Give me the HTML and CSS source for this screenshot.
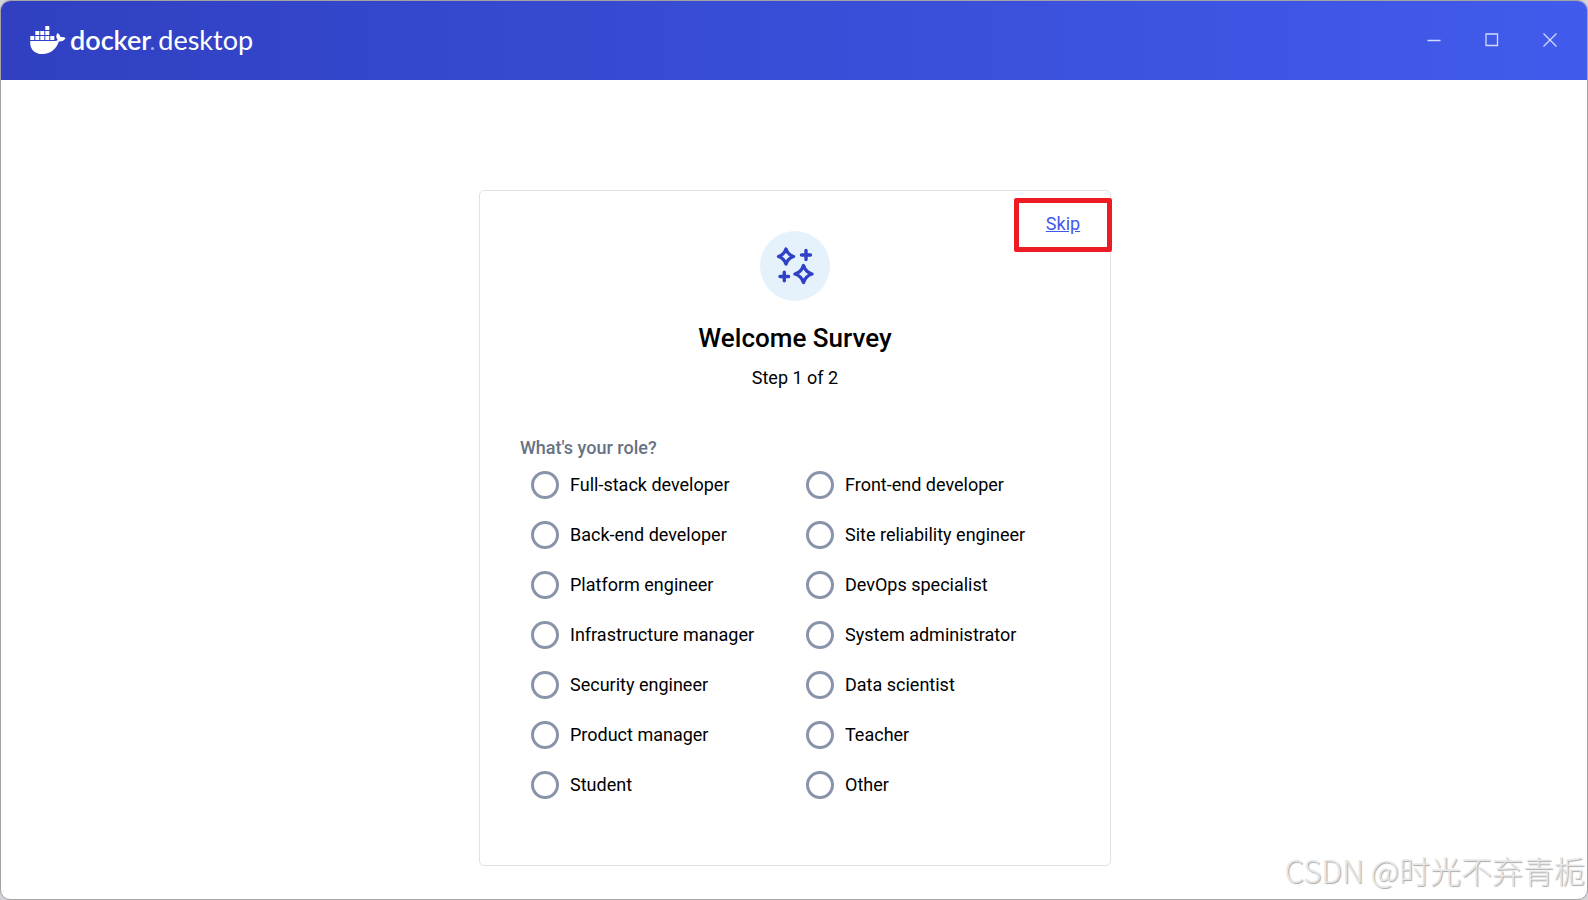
FILE: index.html
```html
<!DOCTYPE html>
<html lang="en">
<head>
    <meta charset="UTF-8">
    <meta name="viewport" content="width=device-width, initial-scale=1.0">
    <title>Docker Desktop</title>
    <link rel="stylesheet" href="styles.css">
</head>
<body>
    <div class="window">
        <header class="titlebar">
            <div class="brand">
                <svg class="whale" viewBox="0 0 36 28" width="36" height="28" aria-hidden="true">
                    <g fill="#fff">
                        <rect x="15.3" y="0" width="4" height="4"/>
                        <rect x="5.3" y="5" width="4" height="4"/>
                        <rect x="10.3" y="5" width="4" height="4"/>
                        <rect x="15.3" y="5" width="4" height="4"/>
                        <rect x="0.3" y="10" width="4" height="4"/>
                        <rect x="5.3" y="10" width="4" height="4"/>
                        <rect x="10.3" y="10" width="4" height="4"/>
                        <rect x="15.3" y="10" width="4" height="4"/>
                        <rect x="20.3" y="10" width="4" height="4"/>
                        <path d="M0.2 15H24.2C25.8 15 27.1 14.6 27.8 14C25.7 11.5 26 8.9 27.6 7C29.4 8.2 30.3 9.7 30.4 11.1C32.3 10.7 34.2 11 35.6 12C34.5 14.4 32 15.7 28.8 15.6C26.2 23.2 20.8 28 12.6 28C4.4 28 -0.3 23.2 0.2 15Z"/>
                    </g>
                </svg>
                <span class="wordmark"><b>docker</b><i class="dot"></i><span>desktop</span></span>
            </div>
            <div class="controls">
                <button type="button" aria-label="Minimize">
                    <svg width="14" height="14" viewBox="0 0 14 14"><path d="M0.5 7.5H13.5"/></svg>
                </button>
                <button type="button" aria-label="Maximize">
                    <svg width="14" height="14" viewBox="0 0 14 14"><path d="M1 1H12.5V12.5H1Z"/></svg>
                </button>
                <button type="button" aria-label="Close">
                    <svg width="14" height="14" viewBox="0 0 14 14"><path d="M0.5 0.5L13.5 13.5M13.5 0.5L0.5 13.5"/></svg>
                </button>
            </div>
        </header>

        <main>
            <form class="card">
                <a class="skip" href="#">Skip</a>
                <div class="badge">
                    <svg width="38" height="38" viewBox="0 0 38 38" fill="none" stroke="#2f41c4" stroke-width="3.4" stroke-linejoin="round" stroke-linecap="round" aria-hidden="true">
                        <path d="M10 2Q11.8 7.6 17.5 9.5Q11.8 11.4 10 17Q8.2 11.4 2.5 9.5Q8.2 7.6 10 2Z"/>
                        <path d="M27.5 18.5Q29.5 25 36 27Q29.5 29 27.5 35.5Q25.5 29 19 27Q25.5 25 27.5 18.5Z"/>
                        <path d="M30 3.5V12.5M25.5 8H34.5M8.3 25.3V33.7M4 29.5H12.6"/>
                    </svg>
                </div>
                <h1>Welcome Survey</h1>
                <p class="step">Step 1 of 2</p>

                <fieldset>
                    <legend>What's your role?</legend>
                    <div class="roles">
                        <label><input type="radio" name="role" value="full-stack">Full-stack developer</label>
                        <label><input type="radio" name="role" value="front-end">Front-end developer</label>
                        <label><input type="radio" name="role" value="back-end">Back-end developer</label>
                        <label><input type="radio" name="role" value="sre">Site reliability engineer</label>
                        <label><input type="radio" name="role" value="platform">Platform engineer</label>
                        <label><input type="radio" name="role" value="devops">DevOps specialist</label>
                        <label><input type="radio" name="role" value="infrastructure">Infrastructure manager</label>
                        <label><input type="radio" name="role" value="sysadmin">System administrator</label>
                        <label><input type="radio" name="role" value="security">Security engineer</label>
                        <label><input type="radio" name="role" value="data">Data scientist</label>
                        <label><input type="radio" name="role" value="product">Product manager</label>
                        <label><input type="radio" name="role" value="teacher">Teacher</label>
                        <label><input type="radio" name="role" value="student">Student</label>
                        <label><input type="radio" name="role" value="other">Other</label>
                    </div>
                </fieldset>
            </form>
        </main>
        <div class="watermark" lang="zh-CN">CSDN @时光不弃青栀</div>
    </div>
</body>
</html>
```

FILE: styles.css
```css
* {
    box-sizing: border-box;
}
body {
    margin: 0;
    background-color: #d4d4d8;
    font-family: Roboto, "Noto Sans CJK SC", sans-serif;
    font-size: 18px;
    line-height: 24px;
    color: #000;
}
.window {
    position: relative;
    display: flex;
    flex-direction: column;
    min-height: 100vh;
    border: 1px solid #a3a3a3;
    border-radius: 10px;
    overflow: hidden;
    background-color: #fff;
}

/* title bar */
.titlebar {
    display: flex;
    align-items: center;
    justify-content: space-between;
    height: 79px;
    padding: 0 8px 2px 29px;
    background: linear-gradient(90deg, #3040c1, #415bec);
}
.brand {
    display: flex;
    align-items: center;
    gap: 4px;
    color: #fff;
}
.whale {
    display: block;
}
.wordmark {
    display: flex;
    align-items: center;
    font-family: Lato, sans-serif;
    font-size: 27px;
    line-height: 32px;
}
.wordmark b {
    font-weight: 600;
}
.dot {
    align-self: flex-end;
    width: 3px;
    height: 3px;
    margin: 0 4px 6px 0;
    border-radius: 50%;
    background-color: #a5aeeb;
}
.controls {
    display: flex;
}
.controls button {
    display: flex;
    align-items: center;
    justify-content: center;
    width: 58px;
    height: 58px;
    padding: 0;
    border: 0;
    background: none;
}
.controls svg {
    fill: none;
    stroke: #d3daff;
    stroke-width: 1.3;
}

/* survey card */
main {
    flex: 1;
    padding: 110px 16px 32px 18px;
}
.card {
    position: relative;
    max-width: 632px;
    min-height: 676px;
    margin: 0 auto;
    padding: 40px;
    border: 1px solid #e1e2e6;
    border-radius: 5px;
    text-align: center;
}
.skip {
    position: absolute;
    top: 7px;
    right: -2px;
    width: 98px;
    height: 54px;
    border: 5px solid #ed1c24;
    border-radius: 2px;
    line-height: 42px;
    color: #4159e8;
}
.badge {
    display: flex;
    align-items: center;
    justify-content: center;
    width: 70px;
    height: 70px;
    margin: 0 auto;
    border-radius: 50%;
    background-color: #e5f2fc;
}
h1 {
    margin: 20px 0 11px;
    font-size: 26px;
    font-weight: 500;
    line-height: 34px;
}
.step {
    margin: 0;
}
fieldset {
    margin: 46px 0 0;
    padding: 0;
    border: 0;
    text-align: left;
}
legend {
    padding: 0;
    font-weight: 500;
    color: #677285;
}
.roles {
    display: grid;
    grid-template-columns: 1fr 1fr;
}
.roles label {
    display: flex;
    align-items: center;
    gap: 11px;
    height: 50px;
    padding-left: 11px;
}
.roles input {
    appearance: none;
    width: 28px;
    height: 28px;
    margin: 0;
    border: 3px solid #8993a9;
    border-radius: 50%;
    background-color: #fff;
}
.roles input:checked {
    border-width: 8px;
    border-color: #4159e8;
}

.watermark {
    position: absolute;
    right: 2px;
    bottom: 11px;
    font-family: "Noto Sans CJK SC", sans-serif;
    font-size: 31px;
    font-weight: 300;
    line-height: 36px;
    color: #e6e6e6;
    text-shadow: 1px 1px 1px #a8a8a8;
}
```
